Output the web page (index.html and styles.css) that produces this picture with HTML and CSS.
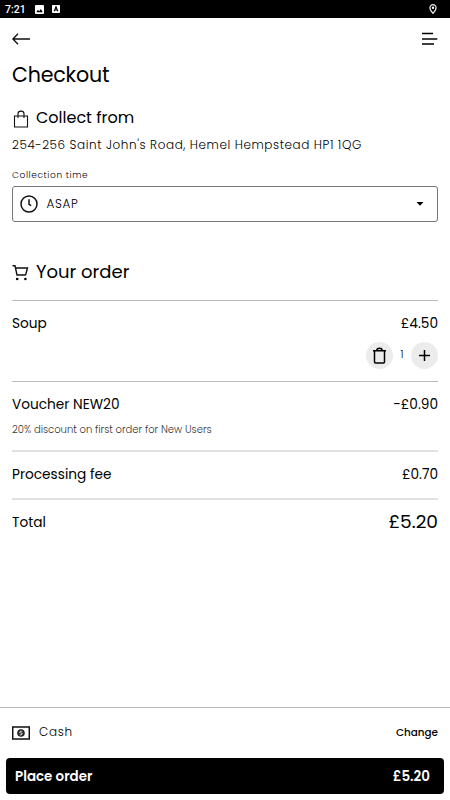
FILE: index.html
```html
<!DOCTYPE html>
<html lang="en">
<head>
<meta charset="utf-8">
<title>Checkout</title>
<link rel="stylesheet" href="styles.css">
</head>
<body>
<div class="screen">
  <div class="status">
    <span class="clock">7:21</span>
    <svg class="status-icon" width="9" height="9" viewBox="0 0 9 9"><rect width="9" height="9" rx="1" fill="#fff"/><path d="M1.300 7.200 3 4.800l1.200 1.400L5.800 4l2 3.200z" fill="#000"/></svg>
    <svg class="status-icon" width="8" height="8" viewBox="0 0 8 8"><rect width="8" height="8" rx=".8" fill="#fff"/><path d="M2.200 6.200 4 1.800l1.800 4.400M2.800 5h2.400" fill="none" stroke="#000" stroke-width="1.100"/></svg>
    <svg class="pin" width="8" height="10" viewBox="0 0 8 10"><path d="M4 .7a3.100 3.100 0 0 0-3.100 3.100C.9 6 4 9.400 4 9.400S7.100 6 7.100 3.800A3.100 3.100 0 0 0 4 .7z" fill="none" stroke="#eee" stroke-width="1.200"/><circle cx="4" cy="3.700" r="1.200" fill="#fff"/></svg>
  </div>
  <header class="topbar">
    <svg width="19" height="12" viewBox="0 0 19 12"><path d="M18 6H1M6 .8.9 6 6 11.200" fill="none" stroke="#111" stroke-width="1.400"/></svg>
    <svg class="menu" width="16" height="13" viewBox="0 0 16 13"><path d="M0 1.500h11M0 12h12" stroke="#000" stroke-width="1.300"/><path d="M0 7h15.300" stroke="#222" stroke-width="1.700"/></svg>
  </header>
  <main class="content">
    <h1>Checkout</h1>
    <section class="collect">
      <h2>
        <svg class="bag" width="16" height="18" viewBox="0 0 16 18"><path d="M1.500 6h13v11h-13zM5 8V3.800C5 .2 11 .2 11 3.800V8" fill="none" stroke="#111" stroke-width="1.100"/></svg>
        <span>Collect from</span>
      </h2>
      <p class="address">254-256 Saint John's Road, Hemel Hempstead HP1 1QG</p>
      <div class="label">Collection time</div>
      <div class="select">
        <svg width="18" height="18" viewBox="0 0 18 18"><circle cx="9" cy="9" r="8" fill="none" stroke="#111" stroke-width="1.500"/><path d="M9 4.200V9.300l2.200 1.400" fill="none" stroke="#111" stroke-width="1.500"/></svg>
        <span class="value">ASAP</span>
        <svg class="caret" width="8" height="4" viewBox="0 0 8 4"><path d="M.5 0h7L4 3.800z"/></svg>
      </div>
    </section>
    <section class="order">
      <h2 class="order-title">
        <svg width="17" height="17" viewBox="0 0 17 17"><path d="M.5 1.700h2.500l2 9.300h8.600M3.500 4h12l-1.900 7" fill="none" stroke="#111" stroke-width="1.400"/><circle cx="5.200" cy="15" r="1.300"/><circle cx="13.400" cy="15" r="1.300"/></svg>
        <span>Your order</span>
      </h2>
      <div class="item">
        <div class="row"><span>Soup</span><span>£4.50</span></div>
        <div class="stepper">
          <button class="round" aria-label="Remove"><svg width="15" height="17" viewBox="0 0 15 17"><path d="M1 3.700h13M2.500 4v11q0 1 1 1h8q1 0 1-1V4M4.800 3.500q0-2.300 2.700-2.300t2.700 2.300" fill="none" stroke="#000" stroke-width="1.500"/></svg></button>
          <span class="qty">1</span>
          <button class="round" aria-label="Add"><svg width="11" height="11" viewBox="0 0 11 11"><path d="M0 5.500h11M5.500 0v11" stroke="#000" stroke-width="1.500"/></svg></button>
        </div>
      </div>
      <div class="voucher">
        <div class="row"><span>Voucher NEW20</span><span>-£0.90</span></div>
        <p class="note">20% discount on first order for New Users</p>
      </div>
      <div class="fee row"><span>Processing fee</span><span>£0.70</span></div>
      <div class="total row"><span>Total</span><strong>£5.20</strong></div>
    </section>
  </main>
  <footer class="footer">
    <div class="payment">
      <svg width="18" height="14" viewBox="0 0 18 14"><path d="M.7 1h16.600v12H.7z" fill="none" stroke="#111" stroke-width="1.500"/><circle cx="9" cy="7" r="3.800" fill="#222"/><path d="M10.400 5.700Q9 4.600 7.900 5.700T9 7t1 1.400-2.400.2" fill="none" stroke="#fff" stroke-width=".8"/></svg>
      <span class="cash">Cash</span>
      <a class="change">Change</a>
    </div>
    <button class="place"><span>Place order</span><span>£5.20</span></button>
  </footer>
</div>
</body>
</html>
```
FILE: styles.css
```css
* { box-sizing: border-box; margin: 0; padding: 0; }
body {
  width: 450px; height: 800px; overflow: hidden;
  background: #fff; color: #000;
  font-family: Poppins, Inter, "Open Sans", sans-serif;
}
button { border: 0; font: inherit; }
svg { display: block; flex: none; }
.screen { display: flex; flex-direction: column; height: 800px; }
.status {
  display: flex; align-items: center; height: 18px; flex: none;
  padding: 0 13px 0 5px; background: #000; color: #fff;
  font: 500 10.500px/18px Roboto, sans-serif;
}
.clock { width: 30px; padding-top: 1px; }
.status-icon { margin-right: 8px; }
.pin { margin-left: auto; }
.topbar { display: flex; align-items: center; justify-content: space-between; height: 42px; padding: 0 12px; flex: none; }
.menu { margin-bottom: 1px; }
.content { flex: 1; padding: 0 12px; white-space: nowrap; min-height: 0; }
h1 { font-size: 20.600px; font-weight: 400; line-height: 30px; letter-spacing: -.2px; }
h2 { display: flex; align-items: center; gap: 7px; padding-left: 1px; font-size: 16px; font-weight: 400; line-height: 24px; }
.bag { margin-top: 2px; }
.collect h2 { margin-top: 16px; }
.address { margin-top: 5px; font-size: 12px; font-weight: 300; line-height: 20px; letter-spacing: .58px; }
.label { margin-top: 12px; font-size: 9px; line-height: 16px; letter-spacing: .6px; font-weight: 300; }
.select {
  display: flex; align-items: center; height: 36px; margin-top: 3px;
  padding: 0 13px 0 7px; border: 1px solid #777; border-radius: 3px;
}
.value { margin: 0 0 1px 8.500px; font-size: 12px; font-weight: 300; line-height: 18px; letter-spacing: .7px; }
.caret { margin-left: auto; }
.order-title { height: 28px; margin-top: 36px; padding-left: 0; font-size: 18px; }
.item { height: 81px; margin-top: 14px; padding-top: 13px; border-top: 1px solid #bbb; }
.row { display: flex; align-items: center; justify-content: space-between; font-size: 13.700px; line-height: 20px; }
.stepper { display: flex; align-items: center; justify-content: flex-end; margin-top: 8px; }
.round { display: grid; place-items: center; width: 27px; height: 27px; border-radius: 50%; background: #ececec; }
.qty { width: 18px; margin-bottom: 2px; text-align: center; font-size: 10px; font-weight: 300; }
.voucher { height: 69px; padding-top: 13px; border-top: 1px solid #bbb; }
.note { margin-top: 6px; color: #333; font-size: 10px; line-height: 18px; font-weight: 300; }
.fee, .total { height: 48px; border-top: 2px solid #e2e2e2; }
.total strong { margin-bottom: 2px; font-size: 18.600px; font-weight: 400; }
.footer { flex: none; height: 93px; padding: 0 6px; border-top: 1px solid #bbb; }
.payment { display: flex; align-items: center; height: 50px; padding: 0 6px; }
.cash { margin: 0 0 2px 9px; font-size: 12px; font-weight: 300; letter-spacing: .7px; }
.change { margin-left: auto; font-size: 10.400px; font-weight: 500; }
.place {
  display: flex; align-items: center; justify-content: space-between;
  width: 100%; height: 36px; padding: 1px 14px 0 9px;
  border-radius: 4px; background: #000; color: #fff; font-size: 13.450px; font-weight: 600;
}
```
